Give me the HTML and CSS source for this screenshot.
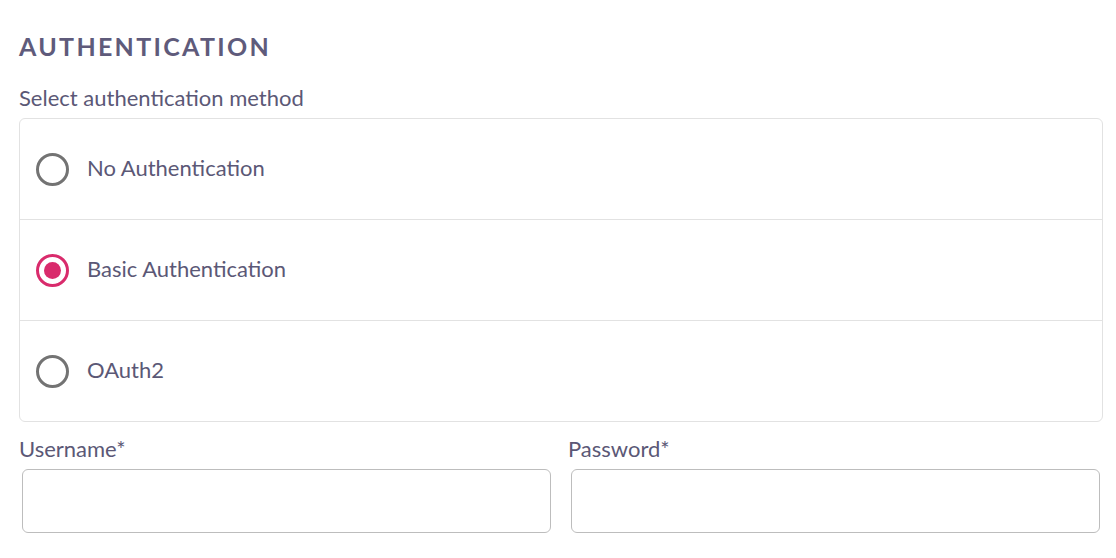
FILE: index.html
```html
<!DOCTYPE html>
<html>
<head>
<meta charset="utf-8">
<link rel="stylesheet" href="styles.css">
</head>
<body>
<div class="page">
  <h2 class="title">AUTHENTICATION</h2>
  <div class="field-label">Select authentication method</div>
  <div class="options">
    <label class="option">
      <span class="radio"></span>
      <span class="option-text">No Authentication</span>
    </label>
    <label class="option">
      <span class="radio checked"></span>
      <span class="option-text">Basic Authentication</span>
    </label>
    <label class="option">
      <span class="radio"></span>
      <span class="option-text">OAuth2</span>
    </label>
  </div>
  <div class="creds">
    <div class="cred">
      <div class="cred-label">Username*</div>
      <div class="input"></div>
    </div>
    <div class="cred">
      <div class="cred-label">Password*</div>
      <div class="input"></div>
    </div>
  </div>
</div>
</body>
</html>
```
FILE: styles.css
```css
html, body {
  margin: 0;
  padding: 0;
  background: #ffffff;
}
body {
  font-family: Lato, "Noto Sans", sans-serif;
  color: #5b5876;
}
.page {
  padding: 30px 13px 0 19px;
}
.title {
  margin: 0;
  font-size: 25px;
  line-height: 32px;
  font-weight: 700;
  letter-spacing: 2.3px;
  color: #5f5b7b;
}
.field-label {
  margin-top: 23px;
  font-size: 22px;
  line-height: 26px;
}
.options {
  margin-top: 7px;
  border: 1px solid #e2e2e2;
  border-radius: 6px;
}
.option {
  display: flex;
  align-items: center;
  height: 100px;
  padding-left: 16px;
  border-top: 1px solid #e2e2e2;
}
.option:first-child {
  border-top: none;
}
.radio {
  box-sizing: border-box;
  width: 33px;
  height: 33px;
  border: 3px solid #737373;
  border-radius: 50%;
  display: flex;
  align-items: center;
  justify-content: center;
}
.radio.checked {
  border-color: #d92b6c;
}
.radio.checked::after {
  content: "";
  width: 17px;
  height: 17px;
  border-radius: 50%;
  background: #d92b6c;
}
.option-text {
  margin-left: 18px;
  font-size: 22px;
  line-height: 26px;
  margin-top: -3px;
}
.creds {
  display: grid;
  grid-template-columns: 1fr 1fr;
  column-gap: 14px;
  margin-top: 14px;
}
.cred-label {
  font-size: 22px;
  line-height: 26px;
}
.input {
  margin: 7px 3px 0 3px;
  height: 64px;
  box-sizing: border-box;
  border: 1px solid #bdbdbd;
  border-radius: 6px;
}
```
